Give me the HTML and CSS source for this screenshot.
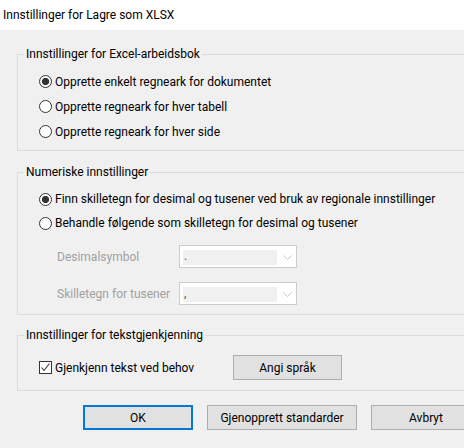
FILE: index.html
```html
<!DOCTYPE html>
<html lang="no">
<head>
<meta charset="utf-8">
<title>Innstillinger for Lagre som XLSX</title>
<link rel="stylesheet" href="styles.css">
</head>
<body>
<div class="titlebar">Innstillinger for Lagre som XLSX</div>
<div class="content">
  <fieldset class="group g1">
    <legend>Innstillinger for Excel-arbeidsbok</legend>
    <div class="inner">
      <div class="opt"><span class="radio checked"></span><span>Opprette enkelt regneark for dokumentet</span></div>
      <div class="opt"><span class="radio"></span><span>Opprette regneark for hver tabell</span></div>
      <div class="opt"><span class="radio"></span><span>Opprette regneark for hver side</span></div>
    </div>
  </fieldset>

  <fieldset class="group g2">
    <legend>Numeriske innstillinger</legend>
    <div class="inner">
      <div class="opt short"><span class="radio checked"></span><span>Finn skilletegn for desimal og tusener ved bruk av regionale innstillinger</span></div>
      <div class="opt short"><span class="radio"></span><span>Behandle følgende som skilletegn for desimal og tusener</span></div>
      <div class="field first">
        <span class="flabel">Desimalsymbol</span>
        <div class="combo"><span class="cval">.</span><svg class="chev" width="9" height="5" viewBox="0 0 9 5"><path d="M0.5 0.5 L4.5 4.5 L8.5 0.5" fill="none" stroke="#c4c4c4" stroke-width="1"/></svg></div>
      </div>
      <div class="field second">
        <span class="flabel">Skilletegn for tusener</span>
        <div class="combo"><span class="cval">,</span><svg class="chev" width="9" height="5" viewBox="0 0 9 5"><path d="M0.5 0.5 L4.5 4.5 L8.5 0.5" fill="none" stroke="#c4c4c4" stroke-width="1"/></svg></div>
      </div>
    </div>
  </fieldset>

  <fieldset class="group g3">
    <legend>Innstillinger for tekstgjenkjenning</legend>
    <div class="inner row3">
      <div class="opt check"><span class="checkbox"><svg width="11" height="11" viewBox="0 0 11 11"><path d="M1.5 5.5 L4 8.5 L9.5 1.5" fill="none" stroke="#333" stroke-width="1.1"/></svg></span><span>Gjenkjenn tekst ved behov</span></div>
      <button class="btn lang">Angi språk</button>
    </div>
  </fieldset>

  <div class="buttons">
    <button class="btn ok">OK</button>
    <button class="btn wide">Gjenopprett standarder</button>
    <button class="btn">Avbryt</button>
  </div>
</div>
</body>
</html>
```
FILE: styles.css
```css
html, body {
  margin: 0;
  padding: 0;
}
body {
  width: 464px;
  height: 448px;
  overflow: hidden;
  background: #f0f0f0;
  font-family: Roboto, "Liberation Sans", sans-serif;
  font-size: 12px;
  color: #000;
}
.titlebar {
  height: 30px;
  background: #fff;
  padding-left: 3px;
  line-height: 30px;
  box-sizing: border-box;
}
.content {
  padding: 16px 0 20px 17px;
  width: 464px;
  box-sizing: border-box;
  overflow: hidden;
}
.group {
  margin: 0;
  padding: 0;
  border: 1px solid #dcdcdc;
  width: 480px;
  box-sizing: border-box;
  min-width: 0;
}
.group legend {
  padding: 0 2px;
  margin-left: 6px;
  line-height: 16px;
  height: 16px;
}
.g2 { margin-top: 13px; }
.g3 { margin-top: 12px; }
.inner {
  padding: 7px 0 6px 21px;
  display: flex;
  flex-direction: column;
}
.opt {
  display: flex;
  align-items: center;
  height: 25px;
  line-height: 16px;
  white-space: nowrap;
}
.opt.short { height: 24px; }
.radio {
  width: 13px;
  height: 13px;
  box-sizing: border-box;
  border: 1px solid #333;
  border-radius: 50%;
  background: #fff;
  margin-right: 3px;
  flex: none;
}
.radio.checked {
  background: radial-gradient(circle at center, #333 0, #333 3.3px, #fff 3.9px);
}
.g2 .inner { padding-bottom: 9px; }
.field {
  display: flex;
  align-items: center;
  padding-left: 18px;
}
.field.first { margin-top: 10px; }
.field.second { margin-top: 14px; }
.flabel {
  width: 122px;
  color: #a0a0a0;
  line-height: 16px;
}
.combo {
  width: 118px;
  height: 23px;
  box-sizing: border-box;
  border: 1px solid #cccccc;
  background: #fff;
  padding: 4px 0 2px 3px;
  display: flex;
  align-items: flex-start;
}
.cval {
  width: 94px;
  height: 15px;
  background: #f0f0f0;
  color: #555;
  line-height: 13px;
  padding-left: 1px;
  box-sizing: border-box;
  flex: none;
}
.chev {
  margin: 5px 0 0 6px;
  flex: none;
}
.row3 {
  flex-direction: row;
  align-items: center;
  padding-top: 12px;
  padding-bottom: 10px;
}
.opt.check {
  width: 194px;
}
.checkbox {
  width: 13px;
  height: 13px;
  box-sizing: border-box;
  border: 1px solid #333;
  background: #fff;
  margin-right: 3px;
  flex: none;
  display: flex;
  align-items: center;
  justify-content: center;
}
.checkbox svg { display: block; }
.btn {
  font-family: inherit;
  font-size: 12px;
  color: #000;
  height: 25px;
  width: 110px;
  box-sizing: border-box;
  border: 1px solid #adadad;
  background: #e1e1e1;
  padding: 0;
  margin: 0;
  flex: none;
}
.btn.ok {
  border: 2px solid #0078d7;
}
.btn.wide { width: 150px; }
.btn.lang { width: 109px; }
.buttons {
  display: flex;
  gap: 14px;
  margin-top: 14px;
  padding-left: 66px;
}
```
